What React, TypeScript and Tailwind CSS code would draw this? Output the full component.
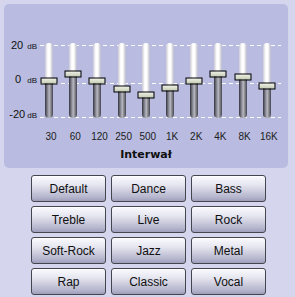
const bands = [
  { label: "30", knob: 38 },
  { label: "60", knob: 31 },
  { label: "120", knob: 38 },
  { label: "250", knob: 46 },
  { label: "500", knob: 52 },
  { label: "1K", knob: 45 },
  { label: "2K", knob: 38 },
  { label: "4K", knob: 31 },
  { label: "8K", knob: 34 },
  { label: "16K", knob: 43 },
]

const presets = [
  "Default", "Dance", "Bass",
  "Treble", "Live", "Rock",
  "Soft-Rock", "Jazz", "Metal",
  "Rap", "Classic", "Vocal",
]

function Slider({ knob }: { knob: number }) {
  return (
    <div className="flex justify-center">
      <div className="relative h-[75px] w-[8px]">
        {/* upper (empty) part of the track */}
        <div className="absolute inset-0 rounded-full bg-[linear-gradient(90deg,#c8c8d4,#ffffff_35%,#ffffff_60%,#b8b8c8)]" />
        {/* filled part below the knob */}
        <div
          className="absolute bottom-0 left-0 right-0 rounded-b-full bg-[linear-gradient(90deg,#34343e,#9c9ca8_40%,#b4b4bc_55%,#45454f)]"
          style={{ top: knob }}
        />
        <div
          className="absolute left-1/2 h-[7px] w-[17px] -translate-x-1/2 -translate-y-1/2 border border-black bg-[linear-gradient(180deg,#eef0e4,#c4ccb4)]"
          style={{ top: knob }}
        />
      </div>
    </div>
  )
}

function DbLabel({ value, gap }: { value: string; gap: string }) {
  return (
    <div className="flex items-baseline justify-end leading-none text-[#101010]">
      <span className="text-[11px]">{value}</span>
      <span className={`${gap} text-[8px]`}>dB</span>
    </div>
  )
}

export default function App() {
  return (
    <div className="h-[297px] w-[295px] overflow-hidden bg-[#d5d6ee] pl-[4px] pt-[4px] font-['Liberation_Sans',Arial,sans-serif]">
      <div className="h-[164px] w-[284px] rounded-[5px] bg-[#b9bce0] pt-[39px]">
        <div className="relative flex h-[75px]">
          {/* dashed guide lines */}
          <div className="absolute left-[36px] right-[7px] top-[2px] h-px bg-[repeating-linear-gradient(90deg,#ffffff_0_4px,transparent_4px_7px)]" />
          <div className="absolute left-[36px] right-[7px] top-[40px] h-px bg-[repeating-linear-gradient(90deg,#ffffff_0_4px,transparent_4px_7px)]" />
          <div className="absolute left-[36px] right-[7px] top-[74px] h-px bg-[repeating-linear-gradient(90deg,#ffffff_0_4px,transparent_4px_7px)]" />

          <div className="flex h-[75px] w-[33px] flex-col justify-between">
            <div className="-mt-[3px]"><DbLabel value="20" gap="ml-[4px]" /></div>
            <div className="-mt-[2px]"><DbLabel value="0" gap="ml-[6px]" /></div>
            <div className="-mb-[2px]"><DbLabel value="-20" gap="ml-[2px]" /></div>
          </div>

          <div className="relative grid grid-cols-[repeat(10,24.2px)]">
            {bands.map((b) => (
              <Slider key={b.label} knob={b.knob} />
            ))}
          </div>
        </div>

        <div className="ml-[35px] mt-[13px] grid grid-cols-[repeat(10,24.2px)] text-[10px] leading-[12px] text-[#202020]">
          {bands.map((b) => (
            <div key={b.label} className="text-center">{b.label}</div>
          ))}
        </div>

        <div className="mt-[5px] text-center font-['DejaVu_Sans',sans-serif] text-[11px] font-bold leading-[13px] text-[#101010]">
          Interwał
        </div>
      </div>

      <div className="ml-[27px] mt-[7px] grid w-[235px] grid-cols-3 gap-x-[5px] gap-y-[4px]">
        {presets.map((p) => (
          <button
            key={p}
            className="h-[27px] rounded-[3px] border border-[#45454e] bg-[linear-gradient(180deg,#fafafe,#e6e6f0_35%,#b4b4cc_85%,#9e9ebc)] text-[12px] text-[#101010] shadow-[inset_0_1px_0_#ffffff]"
          >
            {p}
          </button>
        ))}
      </div>
    </div>
  )
}
